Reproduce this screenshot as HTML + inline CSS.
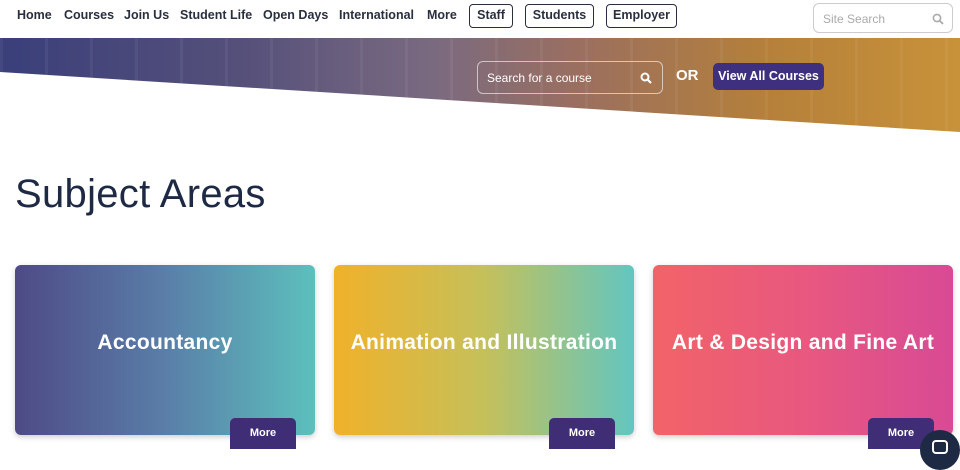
<!DOCTYPE html>
<html><head><meta charset="utf-8"><style>
*{margin:0;padding:0;box-sizing:border-box}
body{width:960px;height:449px;overflow:hidden;background:#fff;font-family:"Liberation Sans",sans-serif;position:relative;color:#1e2a44}
.nav{position:absolute;top:0;left:0;width:960px;height:38px;background:#fff}
.nav a{position:absolute;top:8px;font-size:12.5px;font-weight:bold;color:#2a2f3f;text-decoration:none}
.nb{position:absolute;top:4px;height:24px;border:1.5px solid #2a2f3f;border-radius:4px;font-size:12.5px;font-weight:bold;color:#2a2f3f;text-align:center;line-height:21px}
.ss{position:absolute;left:813px;top:3px;width:140px;height:30px;border:1px solid #ccc;border-radius:6px;font-size:12px;color:#aaa;padding:8px 9px}
.banner{position:absolute;top:38px;left:0;width:960px;height:95px;clip-path:polygon(0 0,100% 0,100% 94px,0 34px);
background:linear-gradient(90deg,#3a3f7a 0%,#55507a 25%,#7a6a80 45%,#9a6f60 60%,#b5803a 80%,#c8923a 100%)}
.banner:after{content:"";position:absolute;inset:0;background:repeating-linear-gradient(90deg,rgba(255,255,255,.05) 0 3px,transparent 3px 45px)}
.cs{position:absolute;left:477px;top:61px;width:186px;height:33px;border:1px solid rgba(255,255,255,.6);border-radius:6px;color:#fff;font-size:12px;padding:9px 9px;z-index:2}
.or{position:absolute;left:676px;top:67px;color:#fff;font-weight:bold;font-size:15px;z-index:2}
.va{position:absolute;left:713px;top:63px;width:111px;height:27px;background:#3f2f7f;border-radius:5px;color:#fff;font-weight:bold;font-size:12.5px;text-align:center;line-height:26px;z-index:2}
h1{position:absolute;left:15px;top:172px;font-size:40px;font-weight:normal;color:#1e2a44;letter-spacing:.3px}
.card{position:absolute;top:265px;width:300px;height:170px;border-radius:6px;box-shadow:0 2px 6px rgba(0,0,0,.2);color:#fff;font-weight:bold;font-size:21px;letter-spacing:.3px;text-align:center;line-height:156px;white-space:nowrap}
.more{position:absolute;top:418px;width:66px;height:31px;background:#3f2d75;border-radius:5px 5px 0 0;color:#fff;font-weight:bold;font-size:11px;text-align:center;line-height:30px}
</style></head><body>
<div class="nav">
<a style="left:17px">Home</a><a style="left:64px">Courses</a><a style="left:124px">Join Us</a><a style="left:180px">Student Life</a><a style="left:263px">Open Days</a><a style="left:339px">International</a><a style="left:427px">More</a>
<div class="nb" style="left:469px;width:44px">Staff</div>
<div class="nb" style="left:525px;width:69px">Students</div>
<div class="nb" style="left:606px;width:71px">Employer</div>
<div class="ss">Site Search<svg style="position:absolute;right:8px;top:9px" width="12" height="12" viewBox="0 0 12 12"><circle cx="5" cy="5" r="3.6" fill="none" stroke="#aaa" stroke-width="1.6"/><path d="M7.6 7.6L11 11" stroke="#aaa" stroke-width="1.8"/></svg></div>
</div>
<div class="banner"></div>
<div class="cs">Search for a course<svg style="position:absolute;right:10px;top:10px" width="12" height="12" viewBox="0 0 12 12"><circle cx="5" cy="5" r="3.5" fill="none" stroke="#fff" stroke-width="2"/><path d="M7.5 7.5L11 11" stroke="#fff" stroke-width="2.2"/></svg></div>
<div class="or">OR</div>
<div class="va">View All Courses</div>
<h1>Subject Areas</h1>
<div class="card" style="left:15px;background:linear-gradient(90deg,#4e4a86,#5a7ea8 50%,#5cc0bd)">Accountancy</div>
<div class="card" style="left:334px;background:linear-gradient(90deg,#f0b12a,#c5c05a 50%,#62c6c0)">Animation and Illustration</div>
<div class="card" style="left:653px;background:linear-gradient(90deg,#f26368,#e8587f 50%,#d84a95)">Art &amp; Design and Fine Art</div>
<div class="more" style="left:230px">More</div>
<div class="more" style="left:549px">More</div>
<div class="more" style="left:868px">More</div>
<div style="position:absolute;left:920px;top:430px;width:40px;height:40px;border-radius:50%;background:#1e2a44"><div style="position:absolute;left:12px;top:10px;width:16px;height:14px;border:2px solid #fff;border-radius:4px"></div></div>
</body></html>
